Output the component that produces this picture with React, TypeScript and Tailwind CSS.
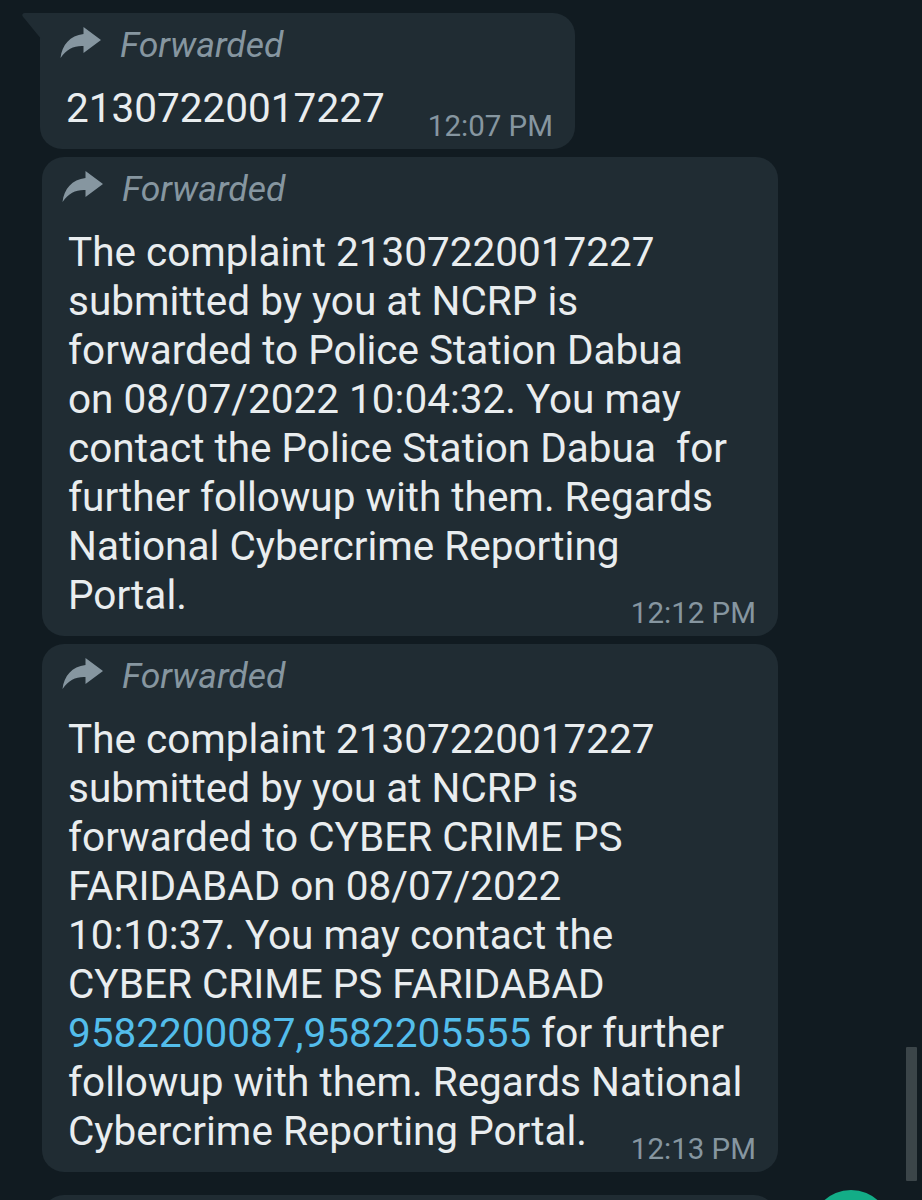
import React from "react";

const ForwardIcon = () => (
  <svg width="41" height="31" viewBox="0 0 41 31" className="shrink-0 mt-[2px]">
    <path
      d="M23.5 0 L41 13 L23.5 26 L23.5 19 C14 18.5 7 22 0.5 31 C2 18 10 8.5 23.5 7 Z"
      fill="#8696a0"
    />
  </svg>
);

const Forwarded = () => (
  <div className="flex items-start gap-[19px] h-[40px] mb-[19px] -ml-[6px]">
    <ForwardIcon />
    <span className="italic text-[35.5px] leading-[40px] text-[#8696a0]">Forwarded</span>
  </div>
);

const Time = ({ t }: { t: string }) => (
  <span className="text-[29.5px] leading-[30px] text-[#8696a0] mb-[-8px] shrink-0 whitespace-nowrap">
    {t}
  </span>
);

const Line = ({ children }: { children: React.ReactNode }) => (
  <div className="whitespace-pre leading-[49px]">{children}</div>
);

function Bubble({
  lines,
  last,
  time,
  width,
  tail,
}: {
  lines: React.ReactNode[];
  last: React.ReactNode;
  time: string;
  width: string;
  tail?: boolean;
}) {
  return (
    <div
      className={`relative bg-[#202c33] pt-[12px] pb-[16px] pl-[26px] pr-[22px] ${width} ${
        tail ? "rounded-[22px] rounded-tl-none" : "rounded-[22px]"
      }`}
    >
      {tail && (
        <svg width="20" height="28" viewBox="0 0 20 28" className="absolute left-[-18px] top-0">
          <path d="M2.5 0 H20 V27 L0.8 3.5 C-0.3 2 0.6 0 2.5 0 Z" fill="#202c33" />
        </svg>
      )}
      <Forwarded />
      <div className="text-[40.5px] text-[#e9edef]">
        {lines.map((l, i) => (
          <Line key={i}>{l}</Line>
        ))}
        <div className="flex items-end justify-between gap-[20px]">
          <div className="whitespace-pre leading-[49px]">{last}</div>
          <Time t={time} />
        </div>
      </div>
    </div>
  );
}

export default function App() {
  return (
    <div
      className="relative h-[1200px] w-[922px] overflow-hidden bg-[#111b21]"
      style={{ fontFamily: "Roboto, 'Noto Sans', sans-serif" }}
    >
      <div className="flex flex-col items-start gap-[8px] pt-[13px] pl-[42px]">
        <div className="-ml-[2px]">
          <Bubble tail width="w-[535px]" lines={[]} last="21307220017227" time="12:07 PM" />
        </div>
        <Bubble
          width="w-[736px]"
          lines={[
            "The complaint 21307220017227",
            "submitted by you at NCRP is",
            "forwarded to Police Station Dabua",
            "on 08/07/2022 10:04:32. You may",
            "contact the Police Station Dabua  for",
            "further followup with them. Regards",
            "National Cybercrime Reporting",
          ]}
          last="Portal."
          time="12:12 PM"
        />
        <Bubble
          width="w-[736px]"
          lines={[
            "The complaint 21307220017227",
            "submitted by you at NCRP is",
            "forwarded to CYBER CRIME PS",
            "FARIDABAD on 08/07/2022",
            "10:10:37. You may contact the",
            "CYBER CRIME PS FARIDABAD",
            <>
              <span className="text-[#53bdeb]">9582200087,9582205555</span> for further
            </>,
            "followup with them. Regards National",
          ]}
          last="Cybercrime Reporting Portal."
          time="12:13 PM"
        />
        <div className="mt-[15px] h-[80px] w-[734px] rounded-[22px] bg-[#202c33]" />
      </div>
      <div className="absolute left-[906px] top-[1047px] h-[134px] w-[11px] rounded-[1px] bg-[#3b4549]" />
      <div className="absolute left-[811px] top-[1190px] h-[80px] w-[80px] rounded-full bg-[#13ad87]" />
    </div>
  );
}
